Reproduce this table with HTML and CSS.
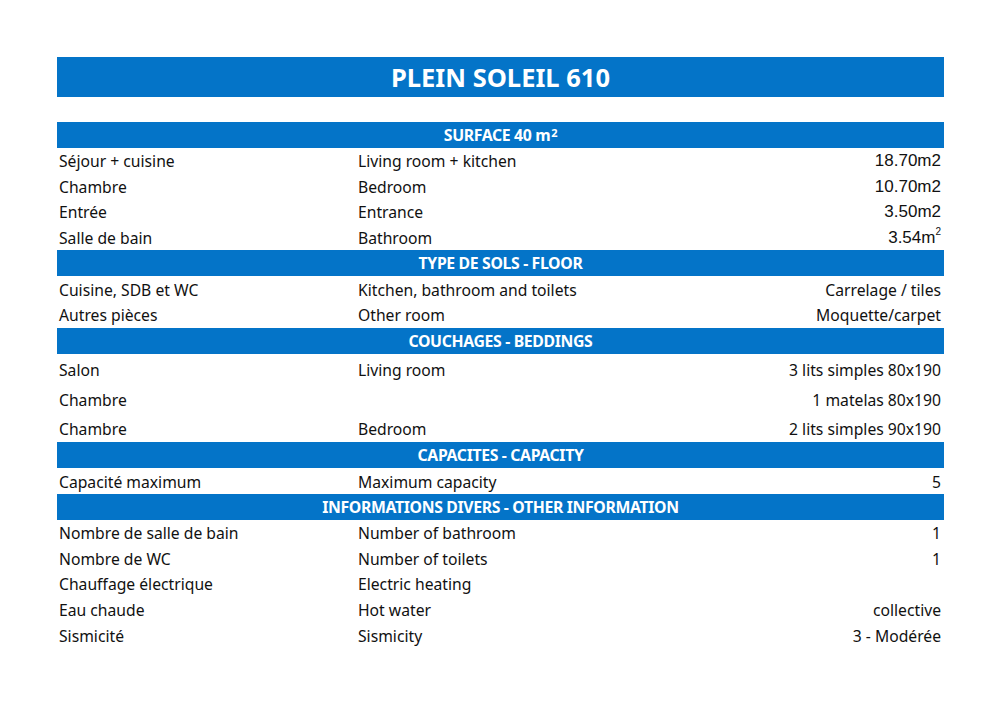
FILE: index.html
```html
<!DOCTYPE html>
<html lang="fr">
<head>
<meta charset="utf-8">
<title>Plein Soleil 610</title>
<link rel="stylesheet" href="styles.css">
</head>
<body>
<div class="sheet">
  <div class="title">PLEIN SOLEIL 610</div>
  <div class="spacer"></div>

  <div class="head">SURFACE 40 m<sup>2</sup></div>
  <div class="row"><span>Séjour + cuisine</span><span>Living room + kitchen</span><span class="val arial">18.70m2</span></div>
  <div class="row"><span>Chambre</span><span>Bedroom</span><span class="val arial">10.70m2</span></div>
  <div class="row"><span>Entrée</span><span>Entrance</span><span class="val arial">3.50m2</span></div>
  <div class="row"><span>Salle de bain</span><span>Bathroom</span><span class="val arial">3.54m<sup>2</sup></span></div>

  <div class="head">TYPE DE SOLS - FLOOR</div>
  <div class="row"><span>Cuisine, SDB et WC</span><span>Kitchen, bathroom and toilets</span><span class="val">Carrelage / tiles</span></div>
  <div class="row"><span>Autres pièces</span><span>Other room</span><span class="val">Moquette/carpet</span></div>

  <div class="head">COUCHAGES - BEDDINGS</div>
  <div class="row tall"><span>Salon</span><span>Living room</span><span class="val">3 lits simples 80x190</span></div>
  <div class="row tall"><span>Chambre</span><span></span><span class="val">1 matelas 80x190</span></div>
  <div class="row tall"><span>Chambre</span><span>Bedroom</span><span class="val">2 lits simples 90x190</span></div>

  <div class="head">CAPACITES - CAPACITY</div>
  <div class="row"><span>Capacité maximum</span><span>Maximum capacity</span><span class="val">5</span></div>

  <div class="head">INFORMATIONS DIVERS - OTHER INFORMATION</div>
  <div class="row"><span>Nombre de salle de bain</span><span>Number of bathroom</span><span class="val">1</span></div>
  <div class="row"><span>Nombre de WC</span><span>Number of toilets</span><span class="val">1</span></div>
  <div class="row"><span>Chauffage électrique</span><span>Electric heating</span><span class="val"></span></div>
  <div class="row"><span>Eau chaude</span><span>Hot water</span><span class="val">collective</span></div>
  <div class="row"><span>Sismicité</span><span>Sismicity</span><span class="val">3 - Modérée</span></div>
</div>
</body>
</html>
```

FILE: styles.css
```css
html, body {
  margin: 0;
  padding: 0;
  background: #ffffff;
}
body {
  font-family: "Noto Sans", "Liberation Sans", sans-serif;
  color: #111111;
}
.sheet {
  width: 887px;
  margin: 57px 0 0 57px;
  display: flex;
  flex-direction: column;
}
.title {
  height: 40px;
  background: #0474c8;
  color: #ffffff;
  font-weight: 700;
  font-size: 25.5px;
  display: flex;
  align-items: center;
  justify-content: center;
  padding-bottom: 1px;
  box-sizing: border-box;
}
.spacer {
  height: 25px;
}
.head {
  height: 26px;
  background: #0474c8;
  color: #ffffff;
  font-weight: 700;
  font-size: 15.8px;
  letter-spacing: -0.35px;
  display: flex;
  align-items: center;
  justify-content: center;
}
.head sup {
  font-size: 11px;
  line-height: 0;
  position: relative;
  top: -2px;
  margin-left: 1px;
}
.row sup {
  font-size: 10px;
  line-height: 0;
  position: relative;
  top: -1px;
}
.row {
  height: 25.6px;
  display: grid;
  grid-template-columns: 299px 1fr auto;
  align-items: center;
  padding: 1px 3px 0 2px;
  box-sizing: border-box;
  font-size: 15.7px;
}
.row.tall {
  height: 29.6px;
  align-items: end;
  padding-bottom: 2px;
}
.val {
  text-align: right;
}
.arial {
  font-family: "Liberation Sans", Arial, sans-serif;
  font-size: 17px;
}
```
